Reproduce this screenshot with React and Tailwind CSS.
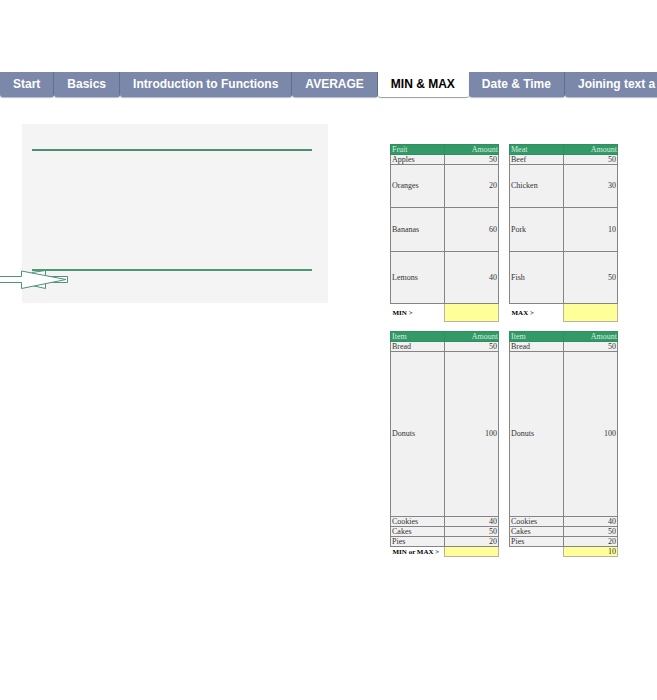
const tabs = ['Start', 'Basics', 'Introduction to Functions', 'AVERAGE', 'MIN & MAX', 'Date & Time', 'Joining text a'];

const produce = ['h-[10px]', 'h-[43px]', 'h-[44px]', 'h-[52px]'];
const bakery = ['h-[10px]', 'h-[165px]', 'h-[10px]', 'h-[10px]', 'h-[10px]'];

const bread = [['Bread', 50], ['Donuts', 100], ['Cookies', 40], ['Cakes', 50], ['Pies', 20]];

const sheets = [
  {
    title: 'Fruit', heights: produce, footer: 'MIN >', answer: '', footerHeight: 'h-[18px]',
    rows: [['Apples', 50], ['Oranges', 20], ['Bananas', 60], ['Lemons', 40]],
  },
  {
    title: 'Meat', heights: produce, footer: 'MAX >', answer: '', footerHeight: 'h-[18px]',
    rows: [['Beef', 50], ['Chicken', 30], ['Pork', 10], ['Fish', 50]],
  },
  { title: 'Item', heights: bakery, footer: 'MIN or MAX >', answer: '', footerHeight: 'h-[10px]', rows: bread },
  { title: 'Item', heights: bakery, footer: '', answer: '10', footerHeight: 'h-[10px]', rows: bread },
];

function Sheet({ title, heights, rows, footer, answer, footerHeight }) {
  return (
    <table className="w-full table-fixed border-collapse font-['Liberation_Serif',serif] text-[8px] leading-[8px] text-[#333]">
      <thead>
        <tr className="h-[10px] bg-[#339966] text-[#d8eee2]">
          <th scope="col" className="border border-[#2f8f5f] p-0 pl-px text-left font-normal">{title}</th>
          <th scope="col" className="border border-[#2f8f5f] p-0 text-right font-normal">Amount</th>
        </tr>
      </thead>
      <tbody>
        {rows.map(([name, amount], i) => (
          <tr key={name} className={`${heights[i]} bg-[#f1f1f1]`}>
            <td className="border border-[#858585] p-0 pl-px">{name}</td>
            <td className="border border-[#858585] p-0 pr-px text-right">{amount}</td>
          </tr>
        ))}
      </tbody>
      <tfoot>
        <tr className={footerHeight}>
          <th scope="row" className="whitespace-nowrap p-0 pl-[2px] text-left text-[7px] font-bold text-black">{footer}</th>
          <td className="border border-[#b5b5a0] bg-[#ffff99] p-0 pr-px text-right">{answer}</td>
        </tr>
      </tfoot>
    </table>
  );
}

function Arrow() {
  return (
    <svg className="absolute left-0 top-[170px]" width="69" height="20" viewBox="0 0 69 20" fill="white" stroke="#4f9377" strokeWidth="1" aria-hidden="true">
      <path d="M22 6.500H67.500V12.500H22Z" />
      <path d="M32 2.500L45.500 0.500V18.500L32 15.500Z" />
      <path d="M-1 6.500H21.500V1L66 9.500L21.500 18.500V12.500H-1Z" />
    </svg>
  );
}

export default function App() {
  return (
    <div className="overflow-hidden bg-white pt-[72px] font-['Liberation_Sans',sans-serif]">
      <nav className="flex h-[28px] overflow-hidden text-[12px] font-bold leading-[25px]">
        {tabs.map((tab) => (
          <a
            key={tab}
            href="#"
            aria-current={tab === 'MIN & MAX' ? 'page' : undefined}
            className={
              tab === 'MIN & MAX'
                ? 'h-[25px] shrink-0 whitespace-nowrap rounded-b-[3px] border-r border-white bg-white px-[13px] text-black shadow-[0_1px_1px_#9a9a9a]'
                : 'h-[25px] shrink-0 whitespace-nowrap rounded-b-[3px] border-r border-[#5c6885] bg-[#7b88a9] px-[13px] text-white shadow-[0_1px_1px_#b5b9c6]'
            }
          >
            {tab}
          </a>
        ))}
      </nav>

      <main className="relative flex items-start gap-[62px] pl-[22px] pr-[39px] pt-[24px]">
        <section className="flex h-[179px] flex-1 flex-col justify-between bg-[#f4f4f4] pb-[32px] pl-[10px] pr-[16px] pt-[25px]">
          <hr className="border-0 border-t-2 border-[#4f8f70]" />
          <hr className="border-0 border-t-2 border-[#4b9a72]" />
        </section>
        <Arrow />

        <section className="mt-[20px] grid w-[228px] grid-cols-2 gap-x-[10px] gap-y-[9px]">
          {sheets.map((sheet, i) => (
            <Sheet key={i} {...sheet} />
          ))}
        </section>
      </main>
    </div>
  );
}
